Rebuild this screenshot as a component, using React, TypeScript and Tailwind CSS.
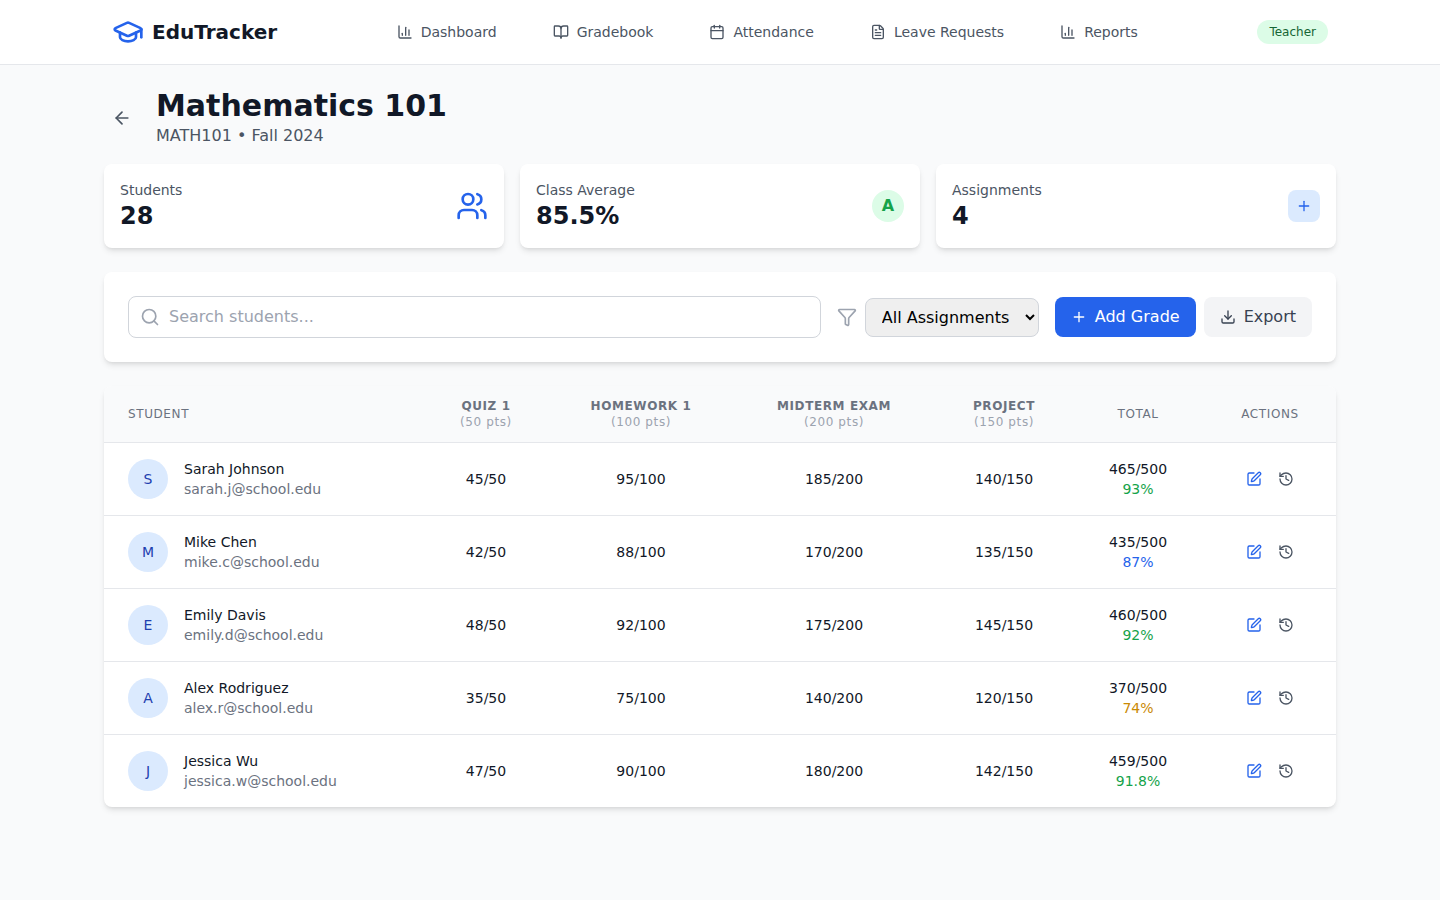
import { ArrowLeft, BookOpen, Calendar, ChartColumn, Download, FileText, Filter, GraduationCap, History, Plus, Search, SquarePen, Users } from "lucide-react";

const navLinks = [
  { label: "Dashboard", icon: ChartColumn },
  { label: "Gradebook", icon: BookOpen },
  { label: "Attendance", icon: Calendar },
  { label: "Leave Requests", icon: FileText },
  { label: "Reports", icon: ChartColumn },
];

const assignments = [
  { name: "Quiz 1", pts: "(50 pts)" },
  { name: "Homework 1", pts: "(100 pts)" },
  { name: "Midterm Exam", pts: "(200 pts)" },
  { name: "Project", pts: "(150 pts)" },
];

const students = [
  { name: "Sarah Johnson", email: "sarah.j@school.edu", scores: ["45/50", "95/100", "185/200", "140/150"], total: "465/500", pct: "93%", tone: "text-[#16a34a]" },
  { name: "Mike Chen", email: "mike.c@school.edu", scores: ["42/50", "88/100", "170/200", "135/150"], total: "435/500", pct: "87%", tone: "text-[#2563eb]" },
  { name: "Emily Davis", email: "emily.d@school.edu", scores: ["48/50", "92/100", "175/200", "145/150"], total: "460/500", pct: "92%", tone: "text-[#16a34a]" },
  { name: "Alex Rodriguez", email: "alex.r@school.edu", scores: ["35/50", "75/100", "140/200", "120/150"], total: "370/500", pct: "74%", tone: "text-[#ca8a04]" },
  { name: "Jessica Wu", email: "jessica.w@school.edu", scores: ["47/50", "90/100", "180/200", "142/150"], total: "459/500", pct: "91.8%", tone: "text-[#16a34a]" },
];

function StatCard({ label, value, children }: { label: string; value: string; children: React.ReactNode }) {
  return (
    <div className="flex items-center justify-between rounded-lg bg-white p-4 shadow-md">
      <div>
        <p className="text-sm text-[#4b5563]">{label}</p>
        <p className="text-2xl font-bold text-[#111827]">{value}</p>
      </div>
      {children}
    </div>
  );
}

export default function App() {
  return (
    <div className="min-h-[900px] bg-[#f9fafb] font-['DejaVu_Sans',sans-serif]">
      <nav className="border-b border-[#e5e7eb] bg-white">
        <div className="mx-auto flex h-16 max-w-7xl items-center justify-between px-8">
          <div className="flex items-center gap-2">
            <GraduationCap className="h-8 w-8 text-[#2563eb]" />
            <span className="text-xl font-bold text-[#111827]">EduTracker</span>
          </div>
          <div className="flex items-center gap-14">
            {navLinks.map((link) => (
              <a key={link.label} className="flex items-center gap-2 text-sm text-[#4b5563]">
                <link.icon className="h-4 w-4" />
                {link.label}
              </a>
            ))}
          </div>
          <span className="rounded-full bg-[#dcfce7] px-3 py-1 text-xs text-[#166534]">Teacher</span>
        </div>
      </nav>

      <main className="mx-auto max-w-7xl px-6 pt-[23px]">
        <div className="mb-4 flex items-center gap-6 pl-2">
          <ArrowLeft className="h-5 w-5 text-[#4b5563]" />
          <div>
            <h1 className="text-3xl font-bold text-[#111827]">Mathematics 101</h1>
            <p className="text-[#4b5563]">MATH101 • Fall 2024</p>
          </div>
        </div>

        <div className="mb-6 grid grid-cols-3 gap-4">
          <StatCard label="Students" value="28">
            <Users className="h-8 w-8 text-[#2563eb]" />
          </StatCard>
          <StatCard label="Class Average" value="85.5%">
            <div className="flex h-8 w-8 items-center justify-center rounded-full bg-[#dcfce7] font-bold text-[#16a34a]">A</div>
          </StatCard>
          <StatCard label="Assignments" value="4">
            <div className="flex h-8 w-8 items-center justify-center rounded-lg bg-[#dbeafe]">
              <Plus className="h-4 w-4 text-[#2563eb]" />
            </div>
          </StatCard>
        </div>

        <div className="mb-6 flex items-center justify-between gap-4 rounded-lg bg-white p-6 shadow-md">
          <div className="relative flex-1">
            <Search className="absolute top-1/2 left-3 h-5 w-5 -translate-y-1/2 text-[#9ca3af]" />
            <input
              placeholder="Search students..."
              className="w-full rounded-lg border border-[#d1d5db] bg-white py-2 pr-4 pl-10 placeholder:text-[#9ca3af]"
            />
          </div>
          <div className="flex items-center gap-2">
            <Filter className="h-5 w-5 text-[#9ca3af]" />
            <select className="rounded-lg border border-[#d1d5db] bg-[#efefef] px-3 py-2 text-black">
              <option>All Assignments</option>
            </select>
          </div>
          <div className="flex items-center gap-2">
            <button className="flex items-center gap-2 rounded-lg bg-[#2563eb] px-4 py-2 text-white">
              <Plus className="h-4 w-4" />
              Add Grade
            </button>
            <button className="flex items-center gap-2 rounded-lg bg-[#f3f4f6] px-4 py-2 text-[#374151]">
              <Download className="h-4 w-4" />
              Export
            </button>
          </div>
        </div>

        <div className="overflow-hidden rounded-lg bg-white shadow-md">
          <table className="w-full table-fixed">
            <colgroup>
              <col className="w-[318px]" />
              <col className="w-[128px]" />
              <col className="w-[182px]" />
              <col className="w-[204px]" />
              <col className="w-[136px]" />
              <col className="w-[132px]" />
              <col className="w-[132px]" />
            </colgroup>
            <thead className="border-b border-[#e5e7eb] bg-[#f9fafb]">
              <tr>
                <th className="px-6 py-3 text-left text-xs font-normal tracking-wider text-[#6b7280] uppercase">Student</th>
                {assignments.map((a) => (
                  <th key={a.name} className="px-6 py-3 text-center text-xs tracking-wider text-[#6b7280] uppercase">
                    <div className="font-bold">{a.name}</div>
                    <div className="font-normal text-[#9ca3af] normal-case">{a.pts}</div>
                  </th>
                ))}
                <th className="px-6 py-3 text-center text-xs font-normal tracking-wider text-[#6b7280] uppercase">Total</th>
                <th className="px-6 py-3 text-center text-xs font-normal tracking-wider text-[#6b7280] uppercase">Actions</th>
              </tr>
            </thead>
            <tbody className="divide-y divide-[#e5e7eb]">
              {students.map((s) => (
                <tr key={s.email}>
                  <td className="px-6 py-4">
                    <div className="flex items-center gap-4">
                      <div className="flex h-10 w-10 items-center justify-center rounded-full bg-[#dbeafe] text-sm text-[#1e40af]">{s.name[0]}</div>
                      <div>
                        <div className="text-sm text-[#111827]">{s.name}</div>
                        <div className="text-sm text-[#6b7280]">{s.email}</div>
                      </div>
                    </div>
                  </td>
                  {s.scores.map((score, i) => (
                    <td key={i} className="px-6 py-4 text-center text-sm text-[#111827]">{score}</td>
                  ))}
                  <td className="px-6 py-4 text-center text-sm">
                    <div className="text-[#111827]">{s.total}</div>
                    <div className={s.tone}>{s.pct}</div>
                  </td>
                  <td className="px-6 py-4">
                    <div className="flex items-center justify-center gap-4">
                      <SquarePen className="h-4 w-4 text-[#2563eb]" />
                      <History className="h-4 w-4 text-[#4b5563]" />
                    </div>
                  </td>
                </tr>
              ))}
            </tbody>
          </table>
        </div>
      </main>
    </div>
  );
}
